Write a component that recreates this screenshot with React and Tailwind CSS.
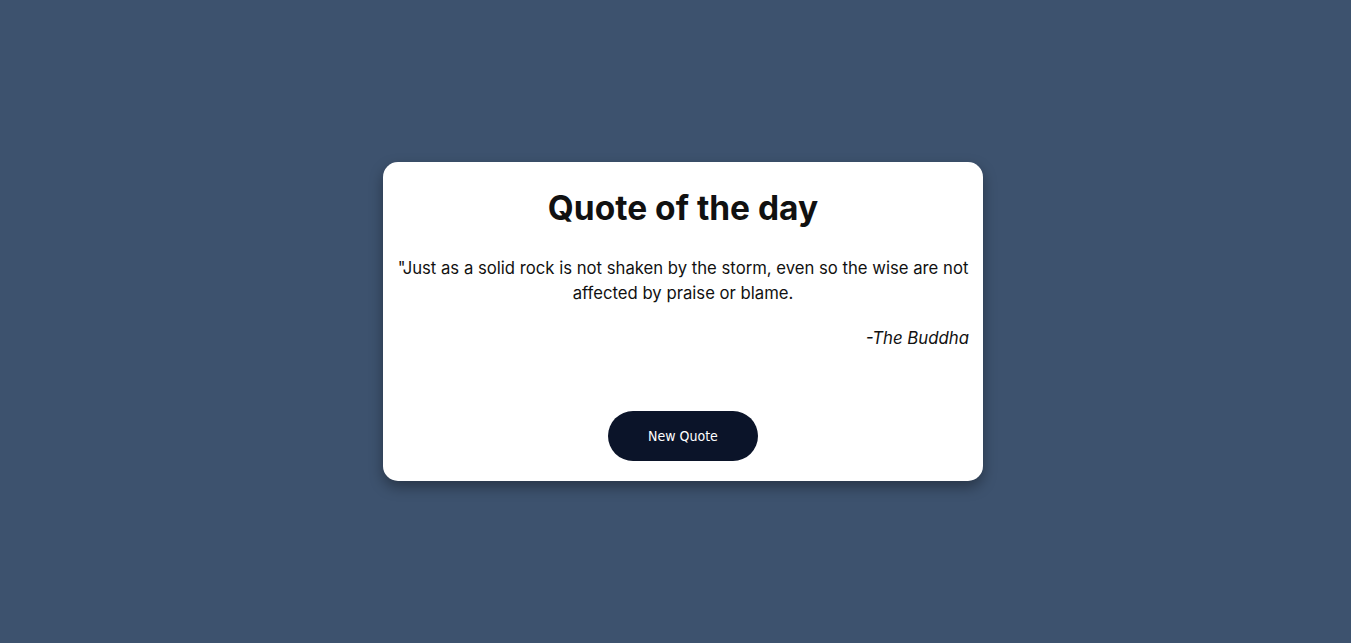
export default function App() {
  return (
    <div className="min-h-screen w-full bg-[#3d526e] flex items-center justify-center pl-[15px]" style={{ minHeight: 643 }}>
      <div className="w-[600px] h-[319px] bg-white rounded-[15px] shadow-[0_6px_14px_rgba(0,0,0,0.35)] flex flex-col px-[12px] pt-[22px] pb-[20px]" style={{ fontFamily: 'Inter, "Open Sans", sans-serif' }}>
        <h1 className="text-[33.5px] leading-[48px] font-bold text-center text-[#111]">Quote of the day</h1>
        <p className="mt-[24px] text-[16.7px] leading-[25px] text-center text-[#111]">
          "Just as a solid rock is not shaken by the storm, even so the wise are not affected by praise or blame.
        </p>
        <p className="mt-[20px] pr-[2px] text-[16.8px] leading-[24px] italic text-right text-[#111]">-The Buddha</p>
        <div className="mt-auto flex justify-center">
          <button className="w-[150px] h-[50px] rounded-full bg-[#0b1429] text-white text-[14px]" style={{ fontFamily: '"DejaVu Sans Condensed", "Liberation Sans", sans-serif' }}>
            New Quote
          </button>
        </div>
      </div>
    </div>
  );
}
